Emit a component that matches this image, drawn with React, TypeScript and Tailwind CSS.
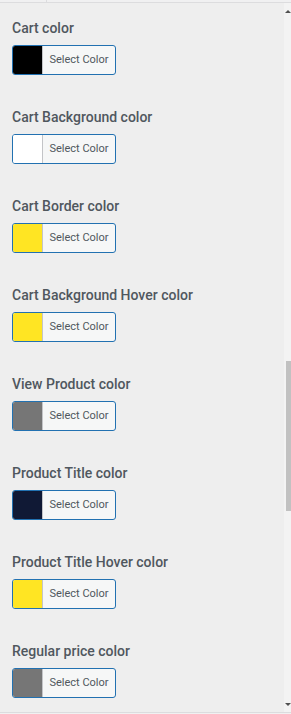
const items = [
  { label: 'Cart color', color: '#000000' },
  { label: 'Cart Background color', color: '#ffffff' },
  { label: 'Cart Border color', color: '#ffe523' },
  { label: 'Cart Background Hover color', color: '#ffe523' },
  { label: 'View Product color', color: '#767676' },
  { label: 'Product Title color', color: '#101935' },
  { label: 'Product Title Hover color', color: '#ffe523' },
  { label: 'Regular price color', color: '#767676' },
]

function ColorPicker({ color }: { color: string }) {
  return (
    <button
      type="button"
      className="flex h-[30px] w-[104px] items-stretch overflow-hidden rounded-[3px] border border-[#2271b1] bg-[#f6f7f7]"
    >
      <span className="w-[30px] shrink-0 border-r border-[#c3c4c7]" style={{ backgroundColor: color }} />
      <span className="flex flex-1 items-center justify-center text-[11px] text-[#50575e]">Select Color</span>
    </button>
  )
}

export default function App() {
  return (
    <div className="relative flex h-[714px] w-[291px] flex-col overflow-hidden bg-[#eeeeee] font-['Roboto',sans-serif]">
      {/* tab strip edge */}
      <div className="flex h-[3px] shrink-0 border-b border-[#dcdcde] bg-[#f0f0f1]">
        <div className="w-[47px] border-r border-[#dcdcde]" />
      </div>

      <div className="flex min-h-0 flex-1">
        <div className="flex-1 px-3 pt-[15px]">
          {items.map((it) => (
            <div key={it.label} className="mb-8">
              <div className="mb-[7px] text-[14px] leading-5 font-medium text-[#50575e]">{it.label}</div>
              <ColorPicker color={it.color} />
            </div>
          ))}
        </div>

        {/* scrollbar */}
        <div className="relative w-[7px] shrink-0 bg-[#f3f3f3]">
          <span className="absolute left-[1px] top-[7px] h-0 w-0 border-x-[3px] border-b-[3px] border-x-transparent border-b-[#505050]" />
          <div className="absolute left-[2px] right-0 top-[358px] h-[150px] bg-[#c1c1c1]" />
          <span className="absolute bottom-[6px] left-[1px] h-0 w-0 border-x-[3px] border-t-[3px] border-x-transparent border-t-[#505050]" />
        </div>
      </div>

      <div className="h-[2px] shrink-0 border-t border-[#dcdcde] bg-[#f0f0f1]" />
    </div>
  )
}
